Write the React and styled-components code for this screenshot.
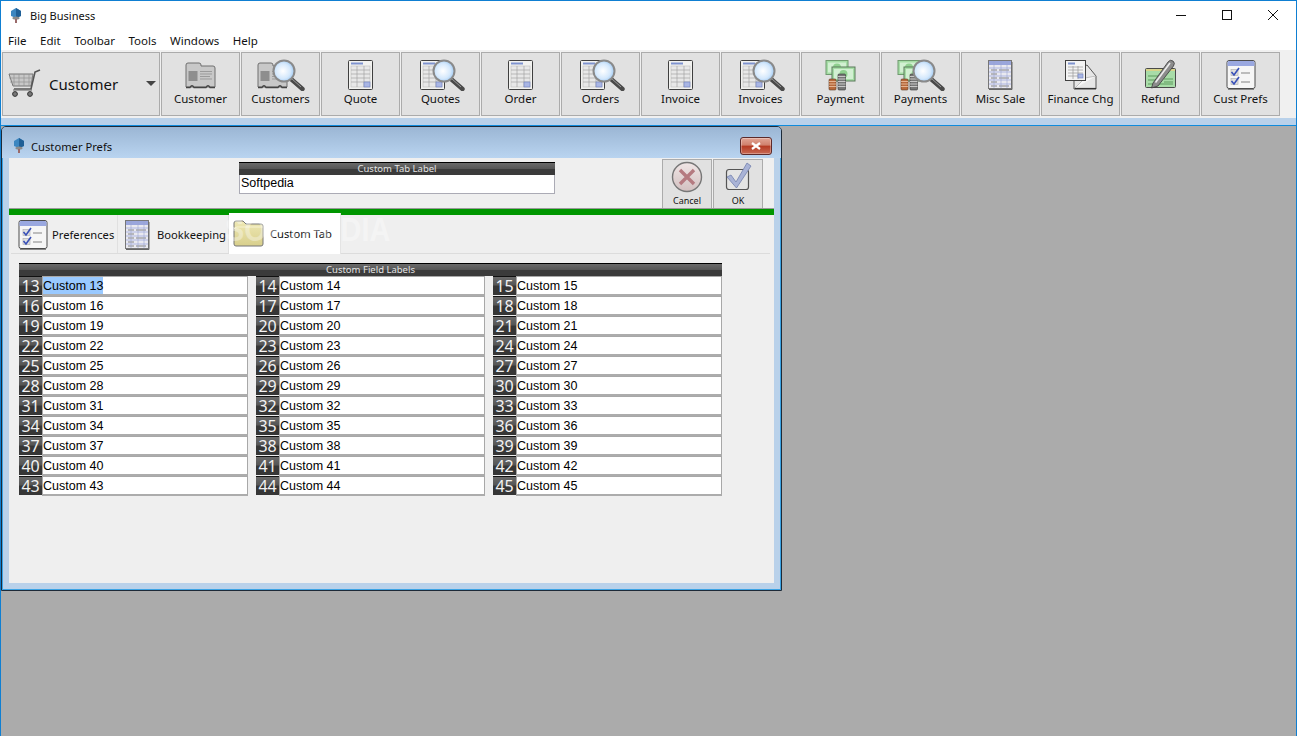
import React from "react";
import styled, { createGlobalStyle } from "styled-components";

const GlobalStyle = createGlobalStyle`
	html, body {
		margin: 0;
		padding: 0;
		overflow: hidden;
		background: #ababab;
	}
	* {
		box-sizing: border-box;
	}
`;

const UI_FONT = `"Noto Sans", "Open Sans", sans-serif`;
const FIELD_FONT = `"Liberation Sans", Arial, sans-serif`;

const AppFrame = styled.div`
	width: 1297px;
	height: 736px;
	display: flex;
	flex-direction: column;
	border: 1px solid #0f7fd2;
	border-bottom: 0;
	font-family: ${UI_FONT};
	color: #111;
	overflow: hidden;
`;

const TitleBar = styled.div`
	height: 29px;
	flex: none;
	background: #fff;
	display: flex;
	align-items: center;
	padding-left: 9px;
	font-size: 11px;
	gap: 8px;
`;

const WinControls = styled.div`
	margin-left: auto;
	display: flex;
	align-items: center;
	height: 100%;
`;

const WinControl = styled.div`
	width: 46px;
	height: 100%;
	display: flex;
	align-items: center;
	justify-content: center;
	margin-top: -2px;
`;

const MenuBar = styled.div`
	height: 20px;
	flex: none;
	background: #fff;
	display: flex;
	align-items: center;
	gap: 13.6px;
	padding: 0 0 0 7px;
	font-size: 11.5px;
`;

const Toolbar = styled.div`
	height: 68px;
	flex: none;
	background: #f0f0f0;
	display: flex;
	gap: 1px;
	padding: 2px 0 2px 1px;
`;

const ToolButton = styled.div`
	width: 79px;
	height: 64px;
	background: #e1e1e1;
	border: 1px solid #ababab;
	display: flex;
	flex-direction: column;
	align-items: center;
	padding-top: 4px;
	font-size: 11.5px;
	line-height: 16px;
`;

const ToolLabel = styled.span`
	margin-top: 0;
	white-space: nowrap;
`;

const ModuleButton = styled.div`
	width: 158px;
	height: 64px;
	background: #e1e1e1;
	border: 1px solid #ababab;
	display: flex;
	align-items: center;
	padding: 0 0 1px 5px;
	font-size: 15px;
	gap: 7px;
`;

const Caret = styled.div`
	margin-left: auto;
	margin-right: 3px;
	width: 0;
	height: 0;
	border-left: 5px solid transparent;
	border-right: 5px solid transparent;
	border-top: 5px solid #444;
`;

const ToolbarEdge = styled.div`
	height: 8px;
	flex: none;
	background: #b9d1ea;
	border-bottom: 1px solid #0f8bdc;
`;

const Workspace = styled.div`
	flex: 1;
	background: #ababab;
	min-height: 0;
`;

const ChildWindow = styled.div`
	width: 781px;
	height: 465px;
	border: 1px solid #1d2a38;
	border-radius: 5px 5px 0 0;
	box-shadow: inset 0 0 0 1px #3ba3e4;
	background: #b9d1ea;
	display: flex;
	flex-direction: column;
`;

const ChildTitle = styled.div`
	height: 31px;
	flex: none;
	padding: 7px 9px 0 11px;
	display: flex;
	align-items: center;
	gap: 6px;
	font-size: 11.2px;
	border-radius: 4px 4px 0 0;
	background: linear-gradient(#9bb6d4, #b9d4f0);
`;

const CloseButton = styled.div`
	margin-left: auto;
	width: 32px;
	height: 18px;
	border: 1px solid #5c2a2a;
	border-radius: 3px;
	background: linear-gradient(#e2a595 0%, #d0806c 45%, #b53a22 50%, #c86a55 100%);
	display: flex;
	align-items: center;
	justify-content: center;
	box-shadow: inset 0 0 0 1px rgba(255, 255, 255, 0.3);
`;

const ChildBody = styled.div`
	width: 765px;
	height: 425px;
	margin-left: 7px;
	background: #efefef;
	position: relative;
	overflow: hidden;
`;

const TopSection = styled.div`
	height: 50px;
	display: flex;
	padding-left: 230px;
`;

const LabelField = styled.div`
	width: 316px;
	margin-top: 4px;
`;

const BarHeader = styled.div`
	height: 13px;
	border-top: 1px solid #000;
	background: linear-gradient(#6a6a6a 0%, #555 50%, #3b3b3b 50%, #3b3b3b 100%);
	color: #e4e4e4;
	font-size: 9.5px;
	line-height: 12px;
	text-align: center;
`;

const TextValue = styled.div`
	height: 19px;
	background: #fff;
	border: 1px solid #ababb5;
	border-top: 0;
	padding-left: 1px;
	font-family: ${FIELD_FONT};
	font-size: 12.5px;
	line-height: 17px;
	color: #000;
`;

const ActionButtons = styled.div`
	display: flex;
	gap: 1px;
	margin-left: 107px;
	margin-top: 1px;
`;

const ActionButton = styled.div`
	width: 50px;
	height: 49px;
	background: #e1e1e1;
	border: 1px solid #ababab;
	border-bottom: 0;
	display: flex;
	flex-direction: column;
	align-items: center;
	padding-top: 1px;
	gap: 2px;
	font-size: 9px;
	line-height: 12px;
`;

const GreenBar = styled.div`
	height: 7px;
	background: #009600;
	border-top: 1px solid #9a9a9a;
`;

const TabRow = styled.div`
	height: 39px;
	margin: 0 4px 0 2px;
	display: flex;
	border-bottom: 1px solid #dcdcdc;
`;

const Tab = styled.div`
	width: ${(p) => p.$w}px;
	height: ${(p) => (p.$active ? 41 : 38)}px;
	margin-top: ${(p) => (p.$active ? -2 : 0)}px;
	padding-left: ${(p) => p.$pad}px;
	padding-top: ${(p) => (p.$active ? 0 : 1)}px;
	gap: ${(p) => p.$gap}px;
	background: ${(p) => (p.$active ? "#fff" : "transparent")};
	border-right: 1px solid ${(p) => (p.$active ? "#e4e4e4" : "#e0e0e0")};
	display: flex;
	align-items: center;
	font-size: 11.2px;
	white-space: nowrap;
	position: relative;
`;

const FieldsSection = styled.div`
	padding: 9px 0 0 10px;
	width: 713px;
`;

const FieldGrid = styled.div`
	display: grid;
	grid-template-columns: repeat(3, 229px);
	column-gap: 8px;
`;

const FieldRow = styled.div`
	height: 20px;
	display: flex;
`;

const FieldNumber = styled.div`
	width: 23px;
	height: 19px;
	border-top: 1px solid #111;
	background: linear-gradient(#6a6a6a 0%, #555 45%, #363636 50%, #363636 100%);
	color: #f2f2f2;
	font-size: 16px;
	line-height: 18px;
	text-align: center;
	letter-spacing: -0.2px;
`;

const FieldInput = styled.div`
	width: 206px;
	height: 20px;
	background: #fff;
	border-top: 1px solid #a8a8a8;
	border-left: 1px solid #a8a8a8;
	border-right: 1px solid #a8a8a8;
	border-bottom: 2px solid #acacac;
	font-family: ${FIELD_FONT};
	font-size: 12.5px;
	line-height: 18px;
	color: #000;
`;

const Selected = styled.span`
	display: inline-block;
	height: 17px;
	vertical-align: top;
	background: #99c9ff;
`;

const Watermark = styled.div`
	position: absolute;
	left: 216px;
	top: 52px;
	font-family: "Liberation Sans", sans-serif;
	font-weight: 700;
	font-size: 34px;
	color: rgba(255, 255, 255, 0.35);
	transform: scaleX(0.85);
	transform-origin: left center;
	pointer-events: none;
`;

const Svg = styled.svg`
	display: block;
	flex: none;
`;

const Lens = () => (
	<g>
		<defs>
			<radialGradient id="lensFill" cx="45%" cy="50%" r="60%">
				<stop offset="0%" stopColor="#ffffff" />
				<stop offset="60%" stopColor="#d4e8fc" />
				<stop offset="100%" stopColor="#8fc0f0" />
			</radialGradient>
		</defs>
		<path d="M34 22 L45.5 32" stroke="#4a4a4a" strokeWidth="4.4" strokeLinecap="round" />
		<path d="M34 21 L44 30" stroke="#9a9a9a" strokeWidth="1" />
		<circle cx="27" cy="14" r="10.5" fill="url(#lensFill)" stroke="#8a8a8a" strokeWidth="2" />
	</g>
);

const BookShape = () => (
	<g>
		<path d="M9 30 V8 Q9 6 11 6 H22 Q24 6 24 8 V9 H36 Q38 9 38 11 V30 Z" fill="#c8c8c8" stroke="#6e6e6e" />
		<path d="M9 30.5 H13 Q15 27 17 30.5 H29 Q31 27 33 30.5 H38" fill="none" stroke="#444" strokeWidth="1.4" />
		<rect x="11.5" y="14" width="9" height="10" fill="#8e8e8e" />
		<path d="M23 14.5 H35 M23 17 H35 M23 19.5 H33 M23 22 H35" stroke="#9b9b9b" />
	</g>
);

const DocShape = () => (
	<g>
		<rect x="11.5" y="3.5" width="24" height="29" rx="1" fill="#f2f2f0" stroke="#3f3f3f" />
		<rect x="14" y="5.5" width="12" height="2" fill="#7f93cf" />
		<rect x="14" y="9" width="19" height="21" fill="#e8e8e8" stroke="#bdbdbd" strokeWidth="0.6" />
		<path d="M14 13 H33 M14 17 H33 M14 21 H33 M14 25 H33 M20 9 V30 M27 9 V30" stroke="#a5a5a5" strokeWidth="0.7" />
		<rect x="27" y="25" width="6" height="5" fill="#a9b6e4" stroke="#6f80c0" strokeWidth="0.6" />
	</g>
);

const MoneyShape = () => (
	<g>
		<rect x="9" y="3.5" width="22" height="14" fill="#a5dca5" stroke="#6f9a6f" />
		<rect x="11" y="5.5" width="18" height="10" fill="#d2f0d2" />
		<ellipse cx="20" cy="10.5" rx="4" ry="4" fill="#8fd08f" />
		<rect x="15" y="10" width="23" height="14" fill="#a5dca5" stroke="#5a7a5a" />
		<rect x="17" y="12" width="19" height="10" fill="#d2f0d2" />
		<ellipse cx="26.5" cy="17" rx="4" ry="4" fill="#8fd08f" />
		<rect x="12" y="22" width="7" height="11" rx="1" fill="#b86a3c" stroke="#5c3a24" strokeWidth="0.6" />
		<path d="M12 24.5 H19 M12 27 H19 M12 29.5 H19" stroke="#f0c8a8" strokeWidth="0.8" />
		<rect x="21" y="17" width="7.5" height="16" rx="1" fill="#777" stroke="#333" strokeWidth="0.6" />
		<path d="M21 19.5 H28.5 M21 22 H28.5 M21 24.5 H28.5 M21 27 H28.5 M21 29.5 H28.5" stroke="#ddd" strokeWidth="0.8" />
	</g>
);

const Icon = ({ children, w = 48, h = 34, box = "0 0 48 34" }) => (
	<Svg width={w} height={h} viewBox={box}>
		{children}
	</Svg>
);

const CustomerIcon = () => <Icon><BookShape /></Icon>;
const CustomersIcon = () => <Icon><g transform="translate(-8 0)"><BookShape /></g><Lens /></Icon>;
const DocIcon = () => <Icon><DocShape /></Icon>;
const DocsIcon = () => <Icon><g transform="translate(-8 0)"><DocShape /></g><Lens /></Icon>;
const MoneyIcon = () => <Icon><MoneyShape /></Icon>;
const MoneysIcon = () => <Icon><g transform="translate(-8 0)"><MoneyShape /></g><Lens /></Icon>;

const LedgerShape = () => (
	<g>
		<rect x="11.5" y="3.5" width="23" height="28" fill="#e9e9ef" stroke="#777" />
		<rect x="12" y="4" width="22" height="4" fill="#9aa6dc" />
		<path d="M12 11 H34 M12 15 H34 M12 19 H34 M12 23 H34 M12 27 H34" stroke="#c2c8e8" strokeWidth="1.4" />
		<path d="M14 13 H20 M14 17 H20 M14 21 H20 M14 25 H20 M14 29 H20 M22 13 H32 M22 21 H32 M22 29 H32" stroke="#6a6a6a" strokeWidth="0.8" />
		<path d="M17 4 V31 M24 4 V31 M30 4 V31" stroke="#9aa6d0" strokeWidth="0.6" />
		<path d="M12 32.5 H35 V5" fill="none" stroke="#666" strokeWidth="1" />
	</g>
);

const FinanceIcon = () => (
	<Icon>
		<path d="M17 14 L30 8 L39 19 V32 H17 Z" fill="#e6e6e6" stroke="#555" />
		<path d="M17 32 L28 21 L39 19" fill="#f6f6f6" stroke="#aaa" strokeWidth="0.7" />
		<path d="M17.5 31.5 H39" stroke="#333" strokeWidth="1.2" />
		<rect x="8.5" y="3.5" width="20" height="20" fill="#f3f3f3" stroke="#3f3f3f" />
		<rect x="11" y="5.5" width="7" height="2" fill="#7f93cf" />
		<path d="M11 10 H26 M11 13 H26 M11 16 H26 M11 19 H26 M16 9 V22 M21 9 V22" stroke="#9a9a9a" strokeWidth="0.7" />
		<rect x="21" y="17" width="5" height="4" fill="#a9b6e4" stroke="#6f80c0" strokeWidth="0.6" />
	</Icon>
);

const RefundIcon = () => (
	<Icon>
		<rect x="8.5" y="11.5" width="30" height="19" rx="1" fill="#a8dca8" stroke="#4a4a4a" />
		<rect x="9" y="12" width="29" height="2" fill="#d8d48a" />
		<path d="M11 19 H22 M11 23 H19 M27 22 H36 M27 25 H36 M11 27 H36" stroke="#5d9a5d" />
		<path d="M16 26 L31 5 Q33 2 36 4 Q38.5 6 36.5 9 L21 29 L14.5 31 Z" fill="#8c8c8c" stroke="#3a3a3a" strokeWidth="0.8" />
		<path d="M18.5 25.5 L33 6" stroke="#eeeeee" strokeWidth="1.6" />
	</Icon>
);

const PrefsShape = () => (
	<g>
		<rect x="10" y="3.5" width="28" height="28" rx="2" fill="#f6f6f6" stroke="#4d4d4d" />
		<path d="M10.5 9 V5.5 Q10.5 4 12 4 H36 Q37.5 4 37.5 5.5 V9 Z" fill="#9aa8e0" />
		<rect x="14" y="12.5" width="7" height="6" fill="#e0e0e0" stroke="#aaa" strokeWidth="0.6" />
		<rect x="14" y="21.5" width="7" height="6" fill="#e0e0e0" stroke="#aaa" strokeWidth="0.6" />
		<path d="M14.5 15 L17 18 L22 11 M14.5 24 L17 27 L22 20" fill="none" stroke="#3850b8" strokeWidth="1.6" />
		<path d="M24 16 H33 M24 25 H33" stroke="#aaa" strokeWidth="1.4" />
		<path d="M11 32.5 H37" stroke="#888" />
	</g>
);

const PrefsIcon = () => <Icon><PrefsShape /></Icon>;

const CartIcon = () => (
	<Svg width="34" height="30" viewBox="0 0 34 30">
		<path d="M1 5 H25 L23 17 H5 Z" fill="#c8c8c8" stroke="#777" />
		<path d="M1 9 H25 M2 13 H24 M6 5 V17 M11 5 V17 M16 5 V17 M21 5 V17" stroke="#939393" strokeWidth="0.7" />
		<path d="M32 1 L27 3 L23 20 H6" fill="none" stroke="#555" strokeWidth="1.6" />
		<path d="M5 21 H24" stroke="#777" strokeWidth="1.2" />
		<circle cx="7" cy="25" r="2.4" fill="#777" stroke="#333" />
		<circle cx="22" cy="25" r="2.4" fill="#777" stroke="#333" />
	</Svg>
);

const PinIcon = () => (
	<Svg width="12" height="16" viewBox="0 0 12 16">
		<path d="M6 0 L11 3 V8 L6 10 L1 8 V3 Z" fill="#3c86c0" />
		<path d="M6 0 L11 3 V8 L6 10 Z" fill="#1f5f96" />
		<ellipse cx="6" cy="10" rx="3.6" ry="1.6" fill="#8a8a8a" />
		<rect x="5" y="11" width="2" height="4" fill="#9a6a6a" />
	</Svg>
);

const CloseGlyph = () => (
	<Svg width="10" height="8" viewBox="0 0 10 8">
		<path d="M1 1 L9 7 M9 1 L1 7" stroke="#fff" strokeWidth="2.2" />
	</Svg>
);

const CancelIcon = () => (
	<Svg width="32" height="32" viewBox="0 0 32 32">
		<defs>
			<linearGradient id="cancelFill" x1="0" y1="0" x2="0" y2="1">
				<stop offset="0%" stopColor="#f0e6e6" />
				<stop offset="100%" stopColor="#d2c0c0" />
			</linearGradient>
		</defs>
		<circle cx="16" cy="16" r="14.5" fill="url(#cancelFill)" stroke="#777" strokeWidth="1.4" />
		<path d="M9 9 L23 23 M23 9 L9 23" stroke="#b57a80" strokeWidth="3.4" />
	</Svg>
);

const OkIcon = () => (
	<Svg width="32" height="32" viewBox="0 0 32 32">
		<rect x="4.5" y="8.5" width="22" height="20" rx="2.5" fill="#e4e4e4" stroke="#555" strokeWidth="1.2" />
		<path d="M5 16 L9 14 L14 21 L25 2 L29 5 L14.5 27 Z" fill="#a9b3d6" stroke="#7482ae" strokeWidth="0.8" />
	</Svg>
);

const FolderIcon = () => (
	<Svg width="31" height="27" viewBox="0 0 31 27">
		<defs>
			<linearGradient id="folderFill" x1="0" y1="0" x2="0" y2="1">
				<stop offset="0%" stopColor="#eee8b4" />
				<stop offset="100%" stopColor="#d8cf8c" />
			</linearGradient>
		</defs>
		<path d="M1 24 V3 Q1 1 3 1 H10 L13 4 H28 Q30 4 30 6 V24 Q30 26 28 26 H3 Q1 26 1 24 Z" fill="url(#folderFill)" stroke="#777" />
		<path d="M1.5 9 Q2 7 4 7 H29.5" fill="none" stroke="#f6f2d0" />
	</Svg>
);

const tools = [
	["Customer", CustomerIcon],
	["Customers", CustomersIcon],
	["Quote", DocIcon],
	["Quotes", DocsIcon],
	["Order", DocIcon],
	["Orders", DocsIcon],
	["Invoice", DocIcon],
	["Invoices", DocsIcon],
	["Payment", MoneyIcon],
	["Payments", MoneysIcon],
	["Misc Sale", () => <Icon><LedgerShape /></Icon>],
	["Finance Chg", FinanceIcon],
	["Refund", RefundIcon],
	["Cust Prefs", PrefsIcon],
];

const menus = ["File", "Edit", "Toolbar", "Tools", "Windows", "Help"];

// fields run 13..45, three to a row
const fieldNumbers = Array.from({ length: 33 }, (_, i) => 13 + i);

const App = () => {
	return (
		<AppFrame>
			<GlobalStyle />
			<TitleBar>
				<PinIcon />
				<span>Big Business</span>
				<WinControls>
					<WinControl>
						<Svg width="10" height="10" viewBox="0 0 10 10"><path d="M0 5.5 H10" stroke="#111" /></Svg>
					</WinControl>
					<WinControl>
						<Svg width="10" height="10" viewBox="0 0 10 10"><rect x="0.5" y="0.5" width="9" height="9" fill="none" stroke="#111" /></Svg>
					</WinControl>
					<WinControl>
						<Svg width="10" height="10" viewBox="0 0 10 10"><path d="M0 0 L10 10 M10 0 L0 10" stroke="#111" /></Svg>
					</WinControl>
				</WinControls>
			</TitleBar>
			<MenuBar>
				{menus.map((m) => <span key={m}>{m}</span>)}
			</MenuBar>
			<Toolbar>
				<ModuleButton>
					<CartIcon />
					<span>Customer</span>
					<Caret />
				</ModuleButton>
				{tools.map(([label, ToolIcon]) => (
					<ToolButton key={label}>
						<ToolIcon />
						<ToolLabel>{label}</ToolLabel>
					</ToolButton>
				))}
			</Toolbar>
			<ToolbarEdge />
			<Workspace>
				<ChildWindow>
					<ChildTitle>
						<PinIcon />
						<span>Customer Prefs</span>
						<CloseButton><CloseGlyph /></CloseButton>
					</ChildTitle>
					<ChildBody>
						<TopSection>
							<LabelField>
								<BarHeader>Custom Tab Label</BarHeader>
								<TextValue>Softpedia</TextValue>
							</LabelField>
							<ActionButtons>
								<ActionButton>
									<CancelIcon />
									<span>Cancel</span>
								</ActionButton>
								<ActionButton>
									<OkIcon />
									<span>OK</span>
								</ActionButton>
							</ActionButtons>
						</TopSection>
						<GreenBar />
						<TabRow>
							<Tab $w={107} $pad={7} $gap={4}>
								<Icon w={30} h={32} box="9 2 30 32"><PrefsShape /></Icon>
								<span>Preferences</span>
							</Tab>
							<Tab $w={111} $pad={7} $gap={7}>
								<Icon w={25} h={32} box="11 2 25 32"><LedgerShape /></Icon>
								<span>Bookkeeping</span>
							</Tab>
							<Tab $w={112} $pad={4} $gap={6} $active>
								<FolderIcon />
								<span>Custom Tab</span>
							</Tab>
						</TabRow>
						<FieldsSection>
							<BarHeader>Custom Field Labels</BarHeader>
							<FieldGrid>
								{fieldNumbers.map((n) => (
									<FieldRow key={n}>
										<FieldNumber>{n}</FieldNumber>
										<FieldInput>
											{n === 13 ? <Selected>Custom 13</Selected> : `Custom ${n}`}
										</FieldInput>
									</FieldRow>
								))}
							</FieldGrid>
						</FieldsSection>
						<Watermark>SOFTPEDIA</Watermark>
					</ChildBody>
				</ChildWindow>
			</Workspace>
		</AppFrame>
	);
};

export default App;
